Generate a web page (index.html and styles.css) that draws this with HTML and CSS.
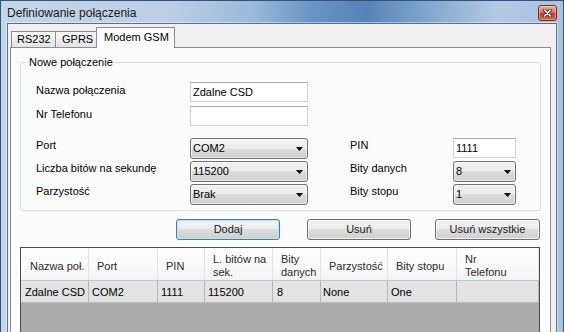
FILE: index.html
```html
<!DOCTYPE html>
<html lang="pl">
<head>
<meta charset="utf-8">
<title>Definiowanie połączenia</title>
<link rel="stylesheet" href="styles.css">
</head>
<body>
<div class="window">
  <div class="titlebar">
    <span class="title">Definiowanie połączenia</span>
    <span class="close">
      <svg width="9" height="8" viewBox="0 0 9 8">
        <path d="M1.5 1 L7.5 7 M7.5 1 L1.5 7" stroke="#5a2418" stroke-width="3.2" stroke-linecap="round"/>
        <path d="M1.5 1 L7.5 7 M7.5 1 L1.5 7" stroke="#ffffff" stroke-width="1.6" stroke-linecap="round"/>
      </svg>
    </span>
  </div>
  <div class="client">
    <div class="tabs">
      <div class="tab">RS232</div>
      <div class="tab">GPRS</div>
      <div class="tab active">Modem GSM</div>
    </div>
    <div class="panel">
      <fieldset class="group">
        <legend>Nowe połączenie</legend>
        <div class="form form-top">
          <span class="lbl">Nazwa połączenia</span>
          <div class="textbox">Zdalne CSD</div>
          <span class="lbl">Nr Telefonu</span>
          <div class="textbox"></div>
        </div>
        <div class="form form-bottom">
          <span class="lbl">Port</span>
          <div class="combo"><span>COM2</span><svg class="arrow" width="7" height="4" viewBox="0 0 7 4"><path d="M0 0H7L3.5 4Z" fill="#000"/></svg></div>
          <span></span>
          <span class="lbl">PIN</span>
          <div class="textbox">1111</div>

          <span class="lbl">Liczba bitów na sekundę</span>
          <div class="combo"><span>115200</span><svg class="arrow" width="7" height="4" viewBox="0 0 7 4"><path d="M0 0H7L3.5 4Z" fill="#000"/></svg></div>
          <span></span>
          <span class="lbl">Bity danych</span>
          <div class="combo"><span>8</span><svg class="arrow" width="7" height="4" viewBox="0 0 7 4"><path d="M0 0H7L3.5 4Z" fill="#000"/></svg></div>

          <span class="lbl">Parzystość</span>
          <div class="combo"><span>Brak</span><svg class="arrow" width="7" height="4" viewBox="0 0 7 4"><path d="M0 0H7L3.5 4Z" fill="#000"/></svg></div>
          <span></span>
          <span class="lbl">Bity stopu</span>
          <div class="combo"><span>1</span><svg class="arrow" width="7" height="4" viewBox="0 0 7 4"><path d="M0 0H7L3.5 4Z" fill="#000"/></svg></div>
        </div>
      </fieldset>
      <div class="buttons">
        <div class="btn default">Dodaj</div>
        <div class="btn">Usuń</div>
        <div class="btn">Usuń wszystkie</div>
      </div>
      <div class="grid">
        <div class="row head">
          <div class="cell c1">Nazwa poł.</div>
          <div class="cell c2">Port</div>
          <div class="cell c3">PIN</div>
          <div class="cell c4">L. bitów na<br>sek.</div>
          <div class="cell c5">Bity<br>danych</div>
          <div class="cell c6">Parzystość</div>
          <div class="cell c7">Bity stopu</div>
          <div class="cell c8">Nr<br>Telefonu</div>
        </div>
        <div class="row data">
          <div class="cell c1">Zdalne CSD</div>
          <div class="cell c2">COM2</div>
          <div class="cell c3">1111</div>
          <div class="cell c4">115200</div>
          <div class="cell c5">8</div>
          <div class="cell c6">None</div>
          <div class="cell c7">One</div>
          <div class="cell c8"></div>
        </div>
      </div>
    </div>
  </div>
</div>
</body>
</html>
```
FILE: styles.css
```css
* { box-sizing: border-box; }
html, body { margin: 0; padding: 0; }
body {
  font-family: "Liberation Sans", Arial, sans-serif;
  font-size: 11px;
  color: #000;
  background: #fff;
}
.window {
  width: 564px;
  height: 332px;
  overflow: hidden;
  border: 1px solid #34537a;
  border-bottom: none;
  padding: 0 6px;
  background:
    linear-gradient(90deg, #c4d5e8 0%, #bccfe5 30%, #9ab9da 45%, #6a95c4 55%, #5683b6 65%, #7ea4cd 75%, #b2c9e3 88%, #a9c2de 100%);
}
.titlebar {
  height: 22px;
  display: flex;
  justify-content: space-between;
  align-items: flex-start;
}
.title {
  font-size: 12px;
  line-height: 15px;
  padding-top: 5px;
  color: #1a1a1a;
}
.close {
  margin-top: 4px;
  width: 19px;
  height: 16px;
  border: 1px solid #7a2a1c;
  border-radius: 3px;
  background: linear-gradient(#eab0a0 0%, #d9735c 45%, #c4412a 55%, #d4634a 100%);
  box-shadow: inset 0 0 0 1px rgba(255,255,255,0.35);
  display: flex;
  align-items: center;
  justify-content: center;
}
.client {
  background: #f0f0f0;
  border: 1px solid #5a6f8a;
  height: 400px;
  box-shadow: 0 0 0 1px rgba(255,255,255,0.45);
}
.tabs {
  height: 23px;
  display: flex;
  align-items: flex-end;
  padding-left: 3px;
}
.tab {
  height: 16px;
  border: 1px solid #898c95;
  border-bottom: none;
  background: linear-gradient(#f7f7f7, #e4e4e4);
  display: flex;
  align-items: center;
  padding: 0 5px 0 5px;
  line-height: 13px;
  margin-left: -1px;
}
.tab:first-child { margin-left: 0; }
.tab:nth-child(1) { width: 45px; padding-left: 5px; }
.tab:nth-child(2) { width: 42px; padding-left: 6px; }
.tab.active {
  height: 21px;
  width: 79px;
  margin-bottom: -1px;
  background: #fcfcfc;
  position: relative;
  z-index: 1;
  padding-left: 7px;
  padding-bottom: 2px;
}
.panel {
  margin-left: 2px;
  margin-right: 5px;
  border: 1px solid #898c95;
  background: #fcfcfc;
  height: 400px;
  padding: 8px 9px 0 9px;
}
.group {
  margin: 0;
  min-width: 0;
  border: 1px solid #d5dfe5;
  border-radius: 3px;
  padding: 13px 0 5px 15px;
}
.group legend {
  margin-left: -9px;
  padding: 0 2px;
  line-height: 13px;
}
.form { display: grid; }
.form-top {
  grid-template-columns: 154px 118px;
  grid-auto-rows: 20px;
  row-gap: 4px;
}
.form-bottom {
  margin-top: 12px;
  grid-template-columns: 154px 118px 42px 103px 63px;
  grid-auto-rows: 21px;
  row-gap: 2px;
}
.lbl {
  line-height: 13px;
  padding-top: 2px;
  white-space: nowrap;
}
.form-bottom .lbl { padding-top: 1px; }
.textbox {
  height: 20px;
  background: #fff;
  border: 1px solid #d0d4dc;
  border-top-color: #abadb3;
  padding-left: 2px;
  line-height: 18px;
}
.combo {
  height: 21px;
  border: 1px solid #707070;
  border-radius: 3px;
  background: linear-gradient(#f2f2f2 0%, #ebebeb 50%, #dddddd 50%, #cfcfcf 100%);
  box-shadow: inset 0 0 0 1px rgba(255,255,255,0.6);
  display: flex;
  justify-content: space-between;
  align-items: center;
  padding: 0 4px 0 2px;
  line-height: 13px;
}
.arrow { display: block; }
.buttons {
  margin-top: 8px;
  display: flex;
  justify-content: flex-end;
  padding-right: 1px;
}
.btn {
  width: 104px;
  height: 21px;
  border: 1px solid #707070;
  border-radius: 3px;
  background: linear-gradient(#f2f2f2 0%, #ebebeb 50%, #dddddd 50%, #cfcfcf 100%);
  box-shadow: inset 0 0 0 1px rgba(255,255,255,0.7);
  display: flex;
  align-items: center;
  justify-content: center;
  line-height: 13px;
  color: #1a1a1a;
}
.btn + .btn { margin-left: 27px; }
.btn + .btn + .btn { margin-left: 24px; width: 105px; }
.btn.default {
  border-color: #3c7fb1;
  box-shadow: inset 0 0 0 1px #bfe2f7;
}
.grid {
  margin-top: 7px;
  width: 520px;
  height: 120px;
  border: 1px solid #4a4a4a;
  background: #ababab;
}
.row { display: flex; }
.cell {
  border-right: 1px solid #b9b9b9;
  line-height: 13px;
  display: flex;
  align-items: center;
  white-space: nowrap;
  overflow: hidden;
}
.c1 { width: 68px; }
.c2 { width: 69px; }
.c3 { width: 47px; }
.c4 { width: 68px; }
.c5 { width: 48px; }
.c6 { width: 67px; }
.c7 { width: 69px; }
.c8 { width: 82px; }
.head {
  height: 33px;
  background: linear-gradient(#ffffff 0%, #fbfbfb 50%, #f2f3f5 100%);
  border-bottom: 1px solid #c6c6c6;
}
.head .cell {
  border-right-color: #e2e3e6;
  padding: 4px 0 0 8px;
  color: #2b2b2b;
}
.head .c1 { padding-left: 9px; }
.data {
  height: 22px;
  background: #e3e3e3;
  border-bottom: 1px solid #b9b9b9;
}
.data .cell {
  padding-left: 3px;
  padding-top: 1px;
}
.data .c1 { padding-left: 4px; }
.data .c5 { padding-left: 4px; }
.data .c6 { padding-left: 2px; }
```
